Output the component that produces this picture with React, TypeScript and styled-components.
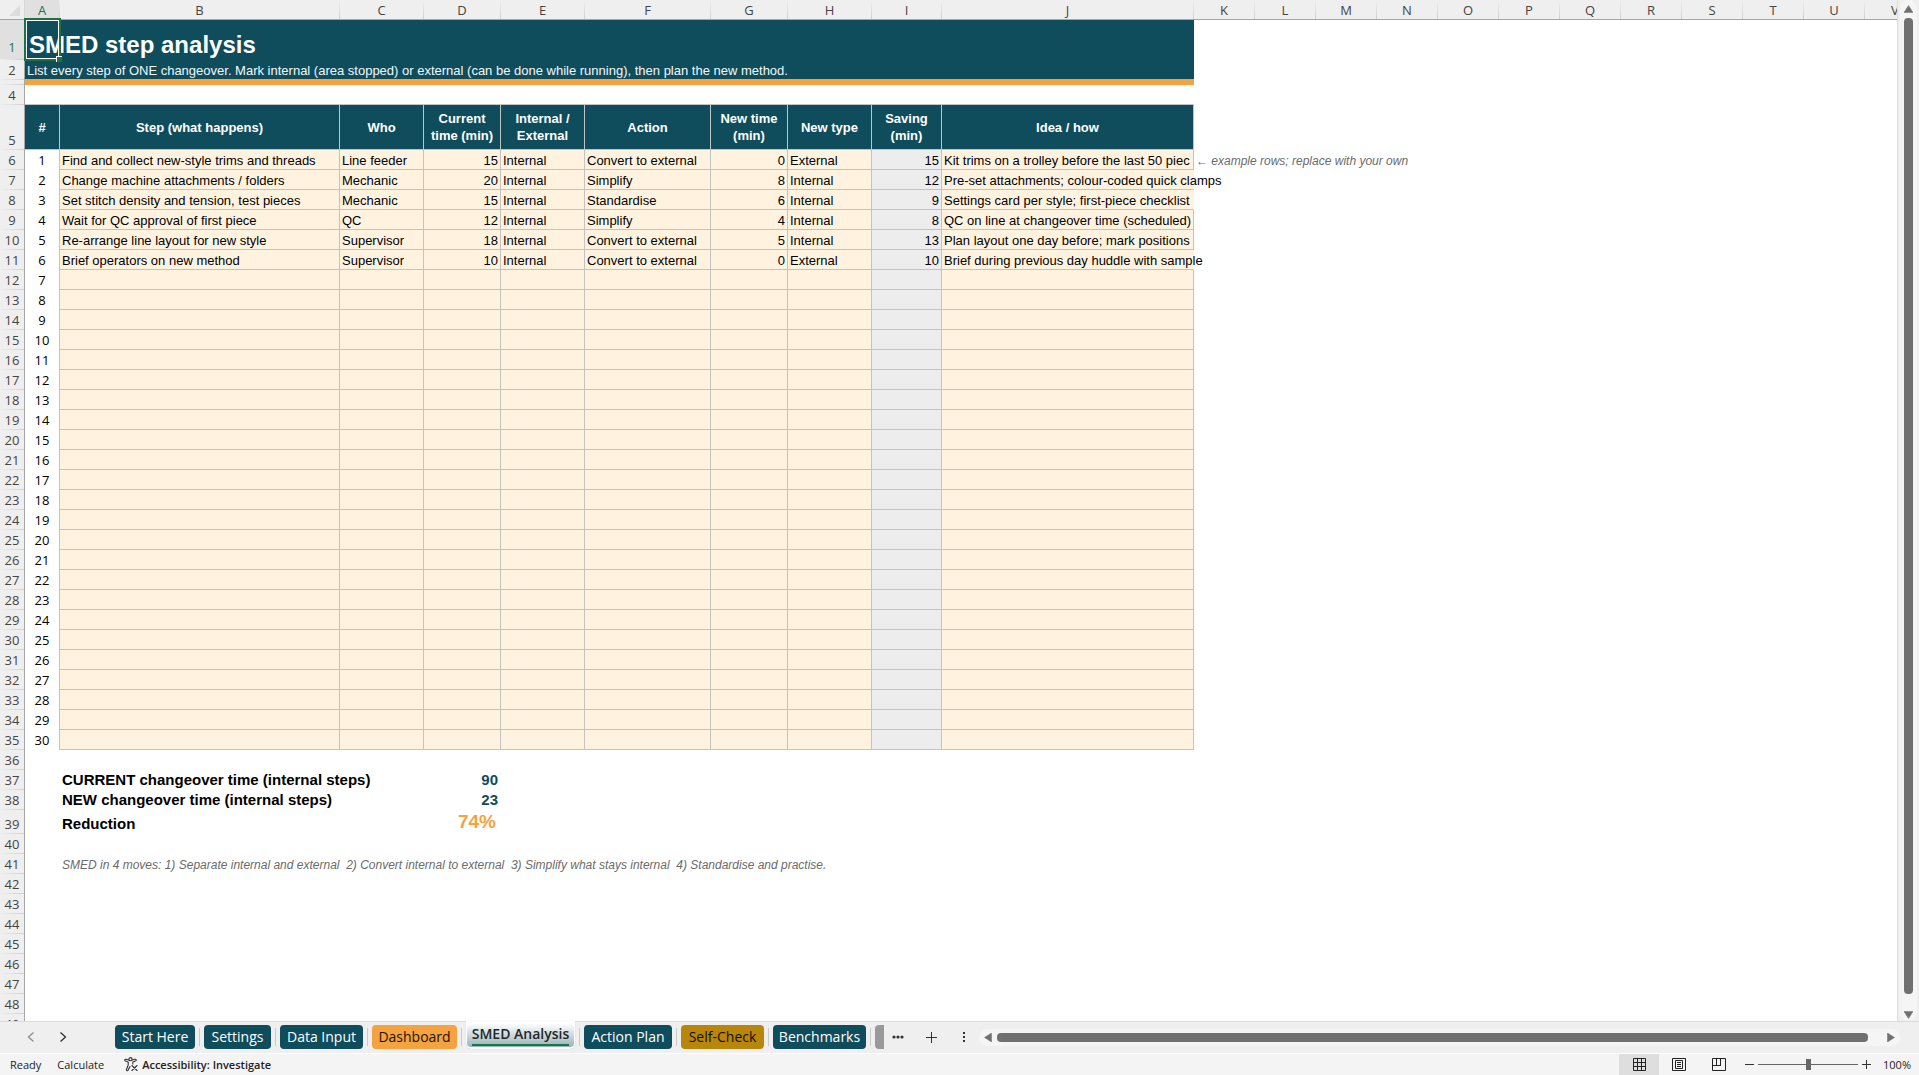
import React from "react";
import styled, { createGlobalStyle, css } from "styled-components";

const TEAL = "#0f4c5c";
const AMBER = "#f4a340";
const CREAM = "#fff3e0";
const GRID = "#c3c3c3";
const CHROME = "#efefef";
const THUMB = "#707070";
const UI_FONT = '"Open Sans", "Noto Sans", sans-serif';
const CELL_FONT = '"Liberation Sans", Arial, sans-serif';

const GlobalStyle = createGlobalStyle`
  *, *::before, *::after { box-sizing: border-box; }
  body { margin: 0; background: ${CHROME}; font-family: ${UI_FONT}; }
  button { font: inherit; color: inherit; border: 0; padding: 0; background: none; cursor: pointer; }
`;

const Page = styled.div`
  display: flex;
  flex-direction: column;
  height: 100vh;
  overflow: hidden;
`;

const Workspace = styled.main`
  display: flex;
  flex: 1;
  min-height: 0;
`;

const SheetView = styled.div`
  flex: 1;
  min-width: 0;
  overflow: hidden;
  background: #fff;
  border-right: 1px solid #dcdcdc;
`;

const Sheet = styled.table`
  table-layout: fixed;
  width: 0;
  border-collapse: separate;
  border-spacing: 0;
  font-family: ${CELL_FONT};
  font-size: 13px;
  line-height: 17px;
  color: #000;
`;

const Col = styled.col<{ $w: number }>`
  width: ${(p) => p.$w}px;
`;

const Row = styled.tr<{ $h: number }>`
  height: ${(p) => p.$h}px;
`;

const Corner = styled.td`
  padding: 0 4px 3px 0;
  background: ${CHROME};
  border-right: 1px solid #d6d6d6;
  border-bottom: 1px solid #a6a6a6;
  vertical-align: bottom;
  line-height: 0;
  text-align: right;
`;

const ColumnHead = styled.th<{ $active?: boolean }>`
  padding: 2px 1px 0 0;
  font: 400 13px/17px ${UI_FONT};
  text-align: center;
  color: ${(p) => (p.$active ? "#217346" : "#444")};
  background: linear-gradient(#efefef, #cfcfcf) right / 1px 100% no-repeat,
    ${(p) => (p.$active ? "#e0e0e0" : CHROME)};
  border-bottom: 1px solid #a6a6a6;
`;

const RowHead = styled.th<{ $active?: boolean; $thin?: boolean }>`
  padding: 0 0 ${(p) => (p.$active ? 4 : p.$thin ? 0 : 1)}px;
  font: 400 13px/17px ${UI_FONT};
  line-height: ${(p) => (p.$thin ? 0 : 17)}px;
  vertical-align: bottom;
  text-align: center;
  color: ${(p) => (p.$active ? "#217346" : "#444")};
  background: linear-gradient(90deg, #efefef, #cfcfcf) bottom / 100% 1px no-repeat,
    ${(p) => (p.$active ? "#e0e0e0" : CHROME)};
  border-right: 1px solid #a6a6a6;
`;

const TitleCell = styled.td`
  position: relative;
  padding: 0 4px 1px;
  background: ${TEAL};
  color: #fff;
  font-size: 24px;
  line-height: 28px;
  font-weight: 700;
  vertical-align: bottom;
  white-space: nowrap;
`;

const SubtitleCell = styled.td`
  padding: 0 2px;
  background: ${TEAL};
  color: #f4f8f9;
  vertical-align: bottom;
  white-space: nowrap;
  line-height: 18px;
`;

const RuleCell = styled.td`
  padding: 0;
  background: ${AMBER};
  box-shadow: 0 -1px 0 ${AMBER};
`;

const SelectionBox = styled.span`
  position: absolute;
  left: -1px;
  top: -2px;
  width: 37px;
  height: 43px;
  border: 2px solid #1e7145;
  box-shadow: inset 0 0 0 1px #fff;

  &::after {
    content: "";
    position: absolute;
    right: -3px;
    bottom: -3px;
    width: 6px;
    height: 6px;
    background: #1e7145;
    border: solid #fff;
    border-width: 1px 0 0 1px;
  }
`;

const BlankCell = styled.td<{ $lineBelow?: boolean }>`
  padding: 0;
  ${(p) => p.$lineBelow && `border-bottom: 1px solid ${GRID};`}
`;

const HeadCell = styled.th`
  padding: 0 2px;
  background: ${TEAL};
  color: #fff;
  font-weight: 700;
  text-align: center;
  vertical-align: middle;
  white-space: pre-line;
  border-right: 1px solid ${GRID};
  border-bottom: 1px solid ${GRID};
`;

const IndexCell = styled.td`
  padding: 0 0 1px;
  font-family: ${UI_FONT};
  text-align: center;
  vertical-align: bottom;
  border-right: 1px solid ${GRID};
`;

const DataCell = styled.td<{ $num?: boolean; $calc?: boolean; $spill?: boolean }>`
  padding: 0 2px;
  background: ${(p) => (p.$calc ? "#ededed" : CREAM)};
  text-align: ${(p) => (p.$num ? "right" : "left")};
  vertical-align: bottom;
  white-space: nowrap;
  border-right: 1px solid ${(p) => (p.$spill ? CREAM : GRID)};
  border-bottom: 1px solid ${GRID};
`;

const NoteCell = styled.td`
  padding: 0 2px;
  font-size: 12px;
  font-style: italic;
  color: #6b6b6b;
  vertical-align: bottom;
  white-space: pre;
`;

const TotalLabel = styled.th`
  padding: 0 2px 1px;
  font-size: 15px;
  line-height: 18px;
  font-weight: 700;
  text-align: left;
  vertical-align: bottom;
  white-space: nowrap;
`;

const TotalValue = styled.td<{ $accent?: boolean }>`
  padding: 0 3px 1px;
  text-align: right;
  font-weight: 700;
  vertical-align: bottom;
  color: ${TEAL};
  font-size: 15px;
  line-height: 18px;
  ${(p) =>
    p.$accent &&
    css`
      padding-right: 5px;
      color: ${AMBER};
      font-size: 19px;
      line-height: 22px;
    `}
`;

const scrollTrack = css`
  display: flex;
  align-items: center;
  justify-content: space-between;
  background: #f5f5f5;
  border-radius: 9px;
`;

const VerticalBar = styled.div`
  ${scrollTrack}
  flex-direction: column;
  width: 17px;
  margin: 0 2px;
  padding: 5px 0 2px;
`;

const VerticalThumb = styled.div`
  flex: 1;
  width: 9px;
  margin: 5px 0 17px;
  border-radius: 4px;
  background: ${THUMB};
`;

const HorizontalBar = styled.div`
  ${scrollTrack}
  flex: 1;
  height: 17px;
  margin: 0 19px 0 7px;
  padding: 0 5px;
`;

const HorizontalThumb = styled.div`
  flex: 1;
  height: 9px;
  margin: 0 19px 0 5px;
  border-radius: 4px;
  background: ${THUMB};
`;

const ArrowButton = styled.button`
  display: flex;
`;

const TabBar = styled.nav`
  display: flex;
  align-items: center;
  height: 32px;
  flex: none;
  padding-bottom: 1px;
  border-top: 1px solid #dcdcdc;
  background: ${CHROME};
`;

const TabNav = styled.div`
  display: flex;
  width: 115px;
  gap: 16px;
  padding-left: 23px;
`;

const IconButton = styled.button<{ $dim?: boolean }>`
  display: flex;
  align-items: center;
  justify-content: center;
  width: 16px;
  height: 24px;
  color: ${(p) => (p.$dim ? "#8f8f8f" : "#333")};
`;

const TabStrip = styled.div`
  display: flex;
  align-items: center;
  height: 30px;
`;

const Tab = styled.button<{ $bg: string; $fg: string; $w: number }>`
  width: ${(p) => p.$w}px;
  height: 24px;
  border-radius: 4px;
  background: ${(p) => p.$bg};
  color: ${(p) => p.$fg};
  font-size: 14px;
  line-height: 24px;
  white-space: nowrap;
`;

const Divider = styled.span`
  width: 1px;
  height: 18px;
  margin: 0 4px;
  background: #cbcbcb;
`;

const ActiveTab = styled.div`
  align-self: flex-start;
  height: 28px;
  margin-top: -1px;
  padding: 3px 1px 2px;
  background: #fff;
  border-radius: 0 0 6px 6px;
  box-shadow: 0 0 1px #bbb;
`;

const ActiveTabButton = styled.button`
  display: flex;
  justify-content: center;
  width: 107px;
  height: 23px;
  border-radius: 4px;
  background: linear-gradient(#fdfefe, #98b2b9);
  color: #262626;
  font-size: 14px;
  font-weight: 600;
  line-height: 19px;
  white-space: nowrap;
`;

const ActiveLabel = styled.span`
  height: 22px;
  border-bottom: 2px solid #107c41;
`;

const ClippedTab = styled.button`
  width: 9px;
  height: 24px;
  border-radius: 4px 0 0 4px;
  background: #999;
`;

const TabTools = styled.div`
  display: flex;
  gap: 17px;
  padding-left: 6px;
`;

const StatusBar = styled.footer`
  display: flex;
  align-items: center;
  height: 22px;
  flex: none;
  padding: 0 8px 0 10px;
  border-top: 1px solid #fff;
  background: #f4f4f4;
  color: #222;
  font-size: 11px;
  line-height: 16px;
`;

const StatusItem = styled.span`
  margin-right: 16px;
`;

const Accessibility = styled.button`
  display: flex;
  align-items: center;
  gap: 4px;
  margin-left: 4px;
  font-weight: 600;
`;

const ViewControls = styled.div`
  display: flex;
  align-items: center;
  margin-left: auto;
`;

const ViewButton = styled.button<{ $on?: boolean }>`
  display: flex;
  align-items: center;
  justify-content: center;
  width: 40px;
  height: 21px;
  background: ${(p) => (p.$on ? "#dedede" : "transparent")};
`;

const ZoomGroup = styled.div`
  display: flex;
  align-items: center;
  margin-left: 2px;
`;

const ZoomButton = styled.button`
  display: flex;
  align-items: center;
  justify-content: center;
  width: 17px;
  height: 20px;
`;

const ZoomSlider = styled.input`
  appearance: none;
  width: 100px;
  height: 11px;
  margin: 0;
  background: linear-gradient(#666, #666) center / 100% 1px no-repeat;

  &::-webkit-slider-thumb {
    appearance: none;
    width: 5px;
    height: 11px;
    background: #666;
  }
`;

const ZoomValue = styled.button`
  width: 36px;
  text-align: right;
`;

const LETTERS = "ABCDEFGHIJKLMNOPQRSTUV".split("");
const WIDTHS = [35, 280, 84, 77, 84, 126, 77, 84, 70, 252];

const HEADS = [
  "#",
  "Step (what happens)",
  "Who",
  "Current\ntime (min)",
  "Internal /\nExternal",
  "Action",
  "New time\n(min)",
  "New type",
  "Saving\n(min)",
  "Idea / how",
];

type Step = [string, string, number, string, string, number, string, number, string];

const STEPS: Step[] = [
  ["Find and collect new-style trims and threads", "Line feeder", 15, "Internal", "Convert to external", 0, "External", 15, "Kit trims on a trolley before the last 50 piec"],
  ["Change machine attachments / folders", "Mechanic", 20, "Internal", "Simplify", 8, "Internal", 12, "Pre-set attachments; colour-coded quick clamps"],
  ["Set stitch density and tension, test pieces", "Mechanic", 15, "Internal", "Standardise", 6, "Internal", 9, "Settings card per style; first-piece checklist"],
  ["Wait for QC approval of first piece", "QC", 12, "Internal", "Simplify", 4, "Internal", 8, "QC on line at changeover time (scheduled)"],
  ["Re-arrange line layout for new style", "Supervisor", 18, "Internal", "Convert to external", 5, "Internal", 13, "Plan layout one day before; mark positions"],
  ["Brief operators on new method", "Supervisor", 10, "Internal", "Convert to external", 0, "External", 10, "Brief during previous day huddle with sample"],
];
const SPILLING = [1, 2, 5];
const NUMERIC = [2, 5, 7];

const TOTALS: Record<number, [string, string]> = {
  37: ["CURRENT changeover time (internal steps)", "90"],
  38: ["NEW changeover time (internal steps)", "23"],
  39: ["Reduction", "74%"],
};

const range = (from: number, to: number) => Array.from({ length: to - from + 1 }, (_, i) => from + i);

function StepRow({ n }: { n: number }) {
  const step = STEPS[n - 1];
  return (
    <Row $h={20}>
      <RowHead scope="row">{n + 5}</RowHead>
      <IndexCell>{n}</IndexCell>
      {range(0, 8).map((c) => (
        <DataCell
          key={c}
          $num={NUMERIC.includes(c)}
          $calc={c === 7}
          $spill={c === 8 && SPILLING.includes(n - 1)}
        >
          {step ? step[c] : null}
        </DataCell>
      ))}
      {n === 1 && <NoteCell>← example rows; replace with your own</NoteCell>}
    </Row>
  );
}

function TailRow({ n }: { n: number }) {
  const total = TOTALS[n];
  return (
    <Row $h={n === 39 ? 24 : 20}>
      <RowHead scope="row">{n}</RowHead>
      <BlankCell />
      {total && (
        <>
          <TotalLabel scope="row">{total[0]}</TotalLabel>
          <BlankCell />
          <TotalValue $accent={n === 39}>{total[1]}</TotalValue>
        </>
      )}
      {n === 41 && (
        <NoteCell>
          {"SMED in 4 moves: 1) Separate internal and external  2) Convert internal to external  3) Simplify what stays internal  4) Standardise and practise."}
        </NoteCell>
      )}
    </Row>
  );
}

function Triangle({ dir }: { dir: "up" | "down" | "left" | "right" }) {
  const shapes = {
    up: "M4.5 .5 9 7.5H0z",
    down: "M0 .5h9L4.5 7.5z",
    left: "M.5 4.5 7.5 0v9z",
    right: "M.5 0v9l7-4.5z",
  };
  const tall = dir === "left" || dir === "right";
  return (
    <svg width={tall ? 8 : 9} height={tall ? 9 : 8} fill={THUMB} stroke={THUMB} strokeWidth=".5" strokeLinejoin="round" aria-hidden>
      <path d={shapes[dir]} />
    </svg>
  );
}

const TABS_LEFT = [
  { name: "Start Here", w: 80, bg: TEAL, fg: "#fff" },
  { name: "Settings", w: 67, bg: TEAL, fg: "#fff" },
  { name: "Data Input", w: 83, bg: TEAL, fg: "#fff" },
  { name: "Dashboard", w: 85, bg: AMBER, fg: "#1a1208" },
];
const TABS_RIGHT = [
  { name: "Action Plan", w: 88, bg: TEAL, fg: "#fff" },
  { name: "Self-Check", w: 83, bg: "#b8860b", fg: "#140f02" },
  { name: "Benchmarks", w: 93, bg: TEAL, fg: "#fff" },
];

export default function App() {
  return (
    <Page>
      <GlobalStyle />
      <Workspace>
        <SheetView>
          <Sheet>
            <colgroup>
              <Col $w={25} />
              {LETTERS.map((l, i) => (
                <Col key={l} $w={WIDTHS[i] ?? 61} />
              ))}
            </colgroup>
            <thead>
              <Row $h={20}>
                <Corner>
                  <svg width="11" height="11" aria-hidden>
                    <path d="M11 0v11H0z" fill="#dcdcdc" />
                  </svg>
                </Corner>
                {LETTERS.map((l) => (
                  <ColumnHead key={l} scope="col" $active={l === "A"}>
                    {l}
                  </ColumnHead>
                ))}
              </Row>
            </thead>
            <tbody>
              <Row $h={40}>
                <RowHead scope="row" $active>1</RowHead>
                <TitleCell colSpan={10}>
                  SMED step analysis
                  <SelectionBox />
                </TitleCell>
              </Row>
              <Row $h={20}>
                <RowHead scope="row">2</RowHead>
                <SubtitleCell colSpan={10}>
                  List every step of ONE changeover. Mark internal (area stopped) or external (can be done while running), then plan the new method.
                </SubtitleCell>
              </Row>
              <Row $h={5}>
                <RowHead scope="row" $thin />
                <RuleCell colSpan={10} />
              </Row>
              <Row $h={20}>
                <RowHead scope="row">4</RowHead>
                <BlankCell colSpan={10} $lineBelow />
              </Row>
              <Row $h={45}>
                <RowHead scope="row">5</RowHead>
                {HEADS.map((h) => (
                  <HeadCell key={h} scope="col">{h}</HeadCell>
                ))}
              </Row>
              {range(1, 30).map((n) => (
                <StepRow key={n} n={n} />
              ))}
              {range(36, 49).map((n) => (
                <TailRow key={n} n={n} />
              ))}
            </tbody>
          </Sheet>
        </SheetView>
        <VerticalBar>
          <ArrowButton aria-label="Scroll up"><Triangle dir="up" /></ArrowButton>
          <VerticalThumb />
          <ArrowButton aria-label="Scroll down"><Triangle dir="down" /></ArrowButton>
        </VerticalBar>
      </Workspace>

      <TabBar>
        <TabNav>
          <IconButton $dim aria-label="Previous sheet">
            <svg width="8" height="10" fill="none" stroke="currentColor" strokeWidth="1.3"><path d="M6.5 .5 1.5 5l5 4.5" /></svg>
          </IconButton>
          <IconButton aria-label="Next sheet">
            <svg width="8" height="10" fill="none" stroke="currentColor" strokeWidth="1.3"><path d="M1.5 .5l5 4.5-5 4.5" /></svg>
          </IconButton>
        </TabNav>
        <TabStrip>
          {TABS_LEFT.map((t) => (
            <React.Fragment key={t.name}>
              <Tab $bg={t.bg} $fg={t.fg} $w={t.w}>{t.name}</Tab>
              <Divider />
            </React.Fragment>
          ))}
          <ActiveTab>
            <ActiveTabButton aria-current="page">
              <ActiveLabel>SMED Analysis</ActiveLabel>
            </ActiveTabButton>
          </ActiveTab>
          {TABS_RIGHT.map((t) => (
            <React.Fragment key={t.name}>
              <Divider />
              <Tab $bg={t.bg} $fg={t.fg} $w={t.w}>{t.name}</Tab>
            </React.Fragment>
          ))}
          <Divider />
          <ClippedTab aria-label="Next hidden sheet" />
        </TabStrip>
        <TabTools>
          <IconButton aria-label="All sheets">
            <svg width="12" height="4" fill="currentColor"><circle cx="2" cy="2" r="1.6" /><circle cx="6" cy="2" r="1.6" /><circle cx="10" cy="2" r="1.6" /></svg>
          </IconButton>
          <IconButton aria-label="New sheet">
            <svg width="11" height="11" stroke="currentColor"><path d="M5.5 0v11M0 5.5h11" /></svg>
          </IconButton>
          <IconButton aria-label="Resize tab bar">
            <svg width="2" height="10" fill="currentColor"><path d="M0 0h2v2H0zM0 4h2v2H0zM0 8h2v2H0z" /></svg>
          </IconButton>
        </TabTools>
        <HorizontalBar>
          <ArrowButton aria-label="Scroll left"><Triangle dir="left" /></ArrowButton>
          <HorizontalThumb />
          <ArrowButton aria-label="Scroll right"><Triangle dir="right" /></ArrowButton>
        </HorizontalBar>
      </TabBar>

      <StatusBar>
        <StatusItem>Ready</StatusItem>
        <StatusItem>Calculate</StatusItem>
        <Accessibility>
          <svg width="14" height="15" viewBox="0 0 14 15" fill="none" stroke="#333" strokeWidth="1.1" strokeLinecap="round" strokeLinejoin="round" aria-hidden>
            <circle cx="6.5" cy="2.2" r="1.6" />
            <path d="M4.9 3 2 2.2C.6 2 .3 3.7 1.5 4.1L4.200 5v3L2.500 12.300c-.4 1.400 1.100 2 1.700.8L6 9.500M8.100 3 11 2.200c1.400-.2 1.700 1.500.5 1.900L8.800 5v2M8 8.500l5 5M13 8.500l-5 5" />
          </svg>
          Accessibility: Investigate
        </Accessibility>
        <ViewControls>
          <ViewButton $on aria-label="Normal view">
            <svg width="13" height="13" fill="none" stroke="#222"><path d="M.5 .5h12v12H.5zM4.500 .5v12M8.500 .5v12M.5 4.500h12M.5 8.500h12" /></svg>
          </ViewButton>
          <ViewButton aria-label="Page layout view">
            <svg width="14" height="13" fill="none" stroke="#222"><path d="M.5 .5h13v12H.5zM3.500 2.500h7v8h-7zM5 4.500h4M5 6.500h4M5 8.500h4" /></svg>
          </ViewButton>
          <ViewButton aria-label="Page break preview">
            <svg width="14" height="13" fill="none" stroke="#222"><path d="M.5 .5h13v12H.5zM4.500 .5v7M.5 7.500h8.500M8.500 .5v7" /></svg>
          </ViewButton>
          <ZoomGroup>
            <ZoomButton aria-label="Zoom out">
              <svg width="9" height="9" stroke="#333"><path d="M0 4.500h9" /></svg>
            </ZoomButton>
            <ZoomSlider type="range" min={0} max={100} defaultValue={50} aria-label="Zoom" />
            <ZoomButton aria-label="Zoom in">
              <svg width="9" height="9" stroke="#333"><path d="M0 4.500h9M4.500 0v9" /></svg>
            </ZoomButton>
            <ZoomValue>100%</ZoomValue>
          </ZoomGroup>
        </ViewControls>
      </StatusBar>
    </Page>
  );
}
